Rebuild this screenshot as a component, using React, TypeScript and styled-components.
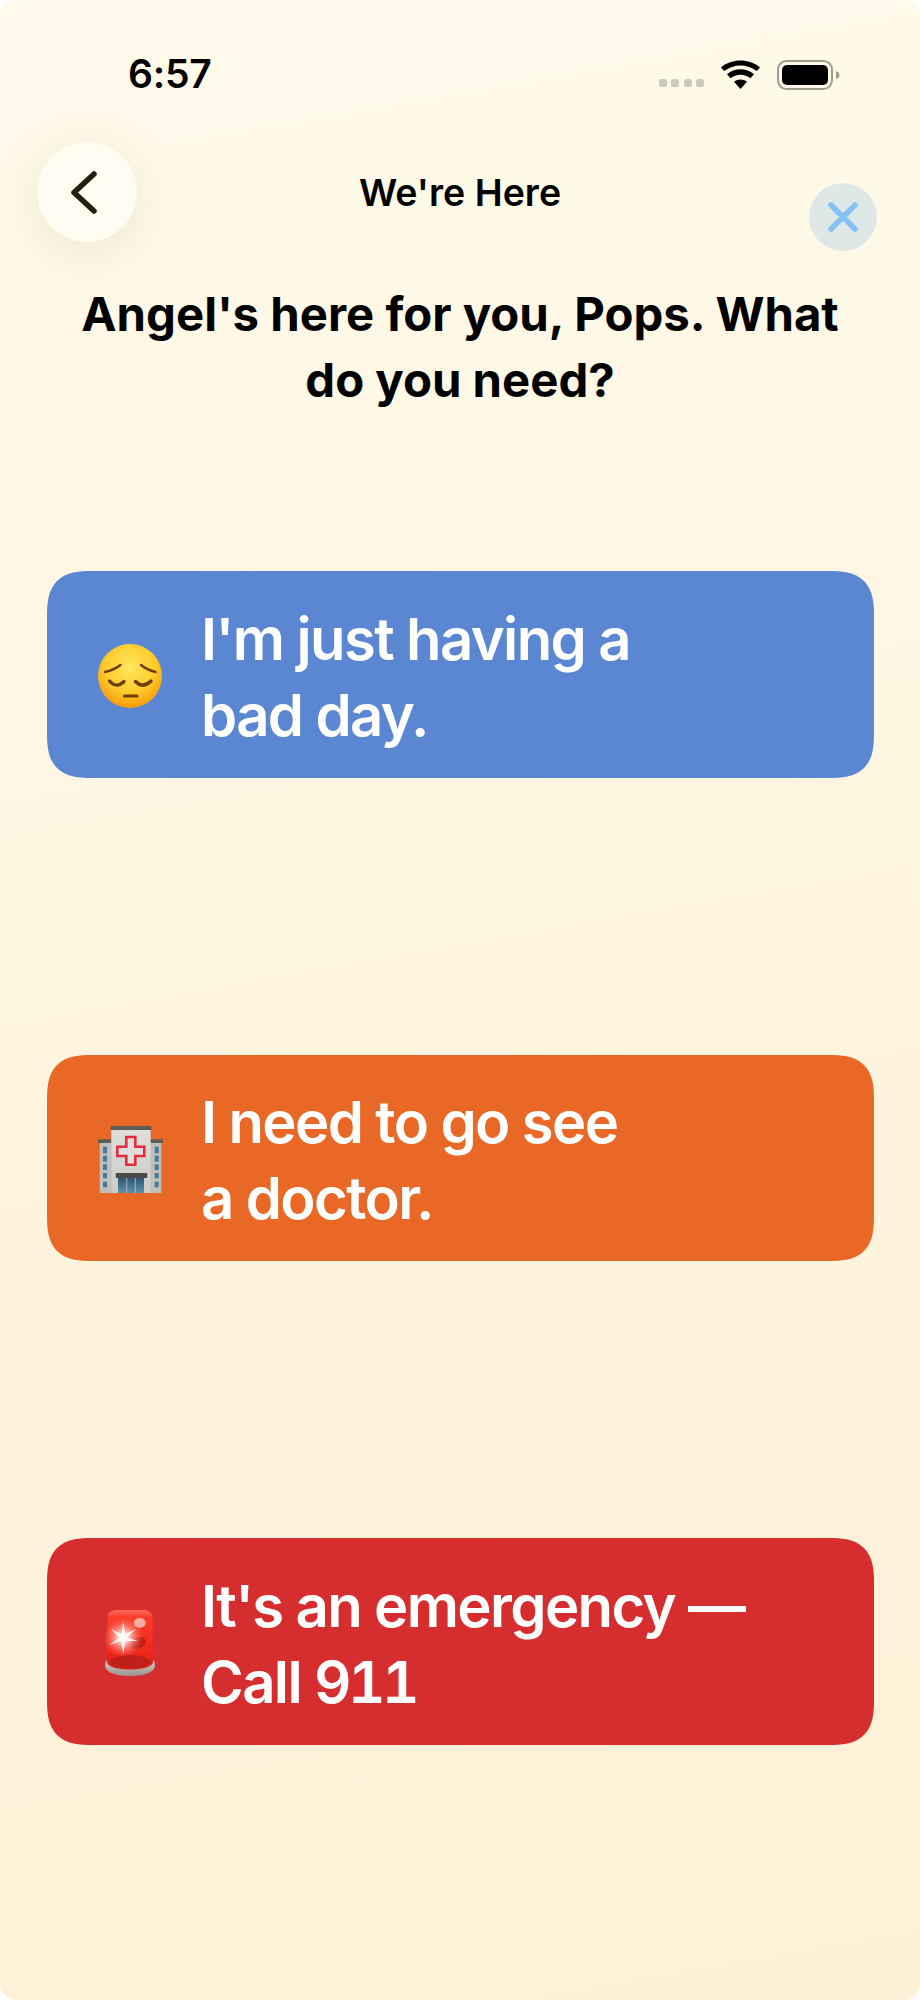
import React from "react";
import styled, { createGlobalStyle } from "styled-components";

const Global = createGlobalStyle`
  html, body { margin: 0; padding: 0; background: #fff; }
  body { font-family: Inter, "Liberation Sans", sans-serif; }
`;

const Screen = styled.div`
  width: 920px;
  height: 2000px;
  display: flex;
  flex-direction: column;
  overflow: hidden;
  border-radius: 16px;
  background: linear-gradient(170deg, #fffaea 0%, #fef0d6 100%);
`;

const StatusBar = styled.div`
  height: 142px;
  box-sizing: border-box;
  padding: 49px 80px 0 128px;
  display: flex;
  justify-content: space-between;
  align-items: flex-start;
`;

const Clock = styled.span`
  font-size: 39px;
  line-height: 50px;
  font-weight: 600;
  letter-spacing: -0.2px;
  color: #000;
`;

const StatusIcons = styled.div`
  display: flex;
  align-items: center;
  gap: 17px;
  padding-top: 11px;
`;

const Signal = styled.div`
  display: flex;
  gap: 4.5px;
  margin-top: 16px;
`;

const SignalDot = styled.span`
  width: 8px;
  height: 8px;
  border-radius: 2.5px;
  background: #cdc7bc;
`;

const Header = styled.div`
  display: grid;
  grid-template-columns: 1fr auto 1fr;
  padding: 0 37px;
  height: 110px;
`;

const BackButton = styled.button`
  width: 100px;
  height: 100px;
  border: 0;
  padding: 0;
  border-radius: 50%;
  background: #fffdf2;
  box-shadow: 0 10px 50px rgba(110, 90, 40, 0.12);
  display: flex;
  align-items: center;
  justify-content: center;
  color: #231f10;
`;

const ScreenTitle = styled.div`
  font-size: 37.5px;
  line-height: 44px;
  font-weight: 600;
  color: #000;
  margin-top: 29px;
`;

const CloseButton = styled.button`
  justify-self: end;
  width: 68px;
  height: 68px;
  margin: 41px 6px 0 0;
  border: 0;
  padding: 0;
  border-radius: 50%;
  background: #dee8e6;
  display: flex;
  align-items: center;
  justify-content: center;
  color: #84c1f5;
`;

const Prompt = styled.h1`
  margin: 29px 0 0;
  padding: 0 70px;
  text-align: center;
  font-size: 47.3px;
  line-height: 66px;
  font-weight: 700;
  color: #000;
`;

const Options = styled.div`
  margin-top: 158px;
  padding: 0 46px 0 47px;
  display: flex;
  flex-direction: column;
  gap: 277px;
`;

const Option = styled.button<{ $bg: string }>`
  height: 206.5px;
  border: 0;
  border-radius: 46px;
  corner-shape: superellipse(1.5);
  background: ${(p) => p.$bg};
  display: flex;
  align-items: center;
  gap: 38px;
  padding: 0 0 0 50px;
  color: #fff;
  font-family: inherit;
  text-align: left;
`;

const EmojiBox = styled.span`
  width: 66px;
  height: 70px;
  margin-top: 3px;
  display: flex;
  align-items: center;
  justify-content: center;
  flex: none;
`;

const OptionText = styled.span`
  font-size: 58px;
  line-height: 76px;
  font-weight: 600;
  letter-spacing: -1.6px;
  padding-top: 5px;
`;

const Line = styled.span`
  display: block;
  white-space: pre;
`;

const Digits = styled.span`
  font-variant-numeric: tabular-nums;
  letter-spacing: -3.5px;
`;

const Wifi = () => (
  <svg width="39" height="30" viewBox="0 0 39 30">
    <path d="M19.5 29 L13 21.8 C16.8 18.6 22.2 18.6 26 21.8 Z" fill="#000" />
    <path d="M9.6 18.2 L6 14.2 C13.5 7.7 25.5 7.7 33 14.2 L29.4 18.2 C23.6 13.5 15.4 13.5 9.6 18.2 Z" fill="#000" />
    <path d="M3.2 11 L0 7.4 C11 -1.7 28 -1.7 39 7.4 L35.8 11 C26.5 3.5 12.5 3.5 3.2 11 Z" fill="#000" />
  </svg>
);

const Battery = () => (
  <svg width="63" height="30" viewBox="0 0 63 30">
    <rect x="1" y="1" width="54" height="28" rx="8.5" fill="none" stroke="#a39c8c" strokeWidth="2" />
    <rect x="5" y="5" width="46" height="20" rx="5" fill="#000" />
    <path d="M59 11 C61.5 11.8 62.5 13.2 62.5 15 C62.5 16.8 61.5 18.2 59 19 Z" fill="#a39c8c" />
  </svg>
);

const PensiveFace = () => (
  <svg width="64" height="64" viewBox="0 0 64 64">
    <defs>
      <radialGradient id="faceFill" cx="50%" cy="36%" r="64%">
        <stop offset="0%" stopColor="#ffe75e" />
        <stop offset="60%" stopColor="#ffcc2e" />
        <stop offset="100%" stopColor="#f79a08" />
      </radialGradient>
    </defs>
    <circle cx="32" cy="32" r="32" fill="url(#faceFill)" />
    <g fill="none" stroke="#6e3f06" strokeLinecap="round">
      <path d="M7 28 Q16 26 22.5 21" strokeWidth="2.4" />
      <path d="M57.5 28 Q49 26 43 21" strokeWidth="2.4" />
      <path d="M11.5 37 Q18.5 45 26 37.5" strokeWidth="3.4" />
      <path d="M53 37 Q45 45 37.5 37.5" strokeWidth="3.4" />
      <path d="M26.5 52 H39" strokeWidth="3.2" />
    </g>
  </svg>
);

const WINDOW_ROWS: [number, number][] = [
  [20.7, 6.6],
  [29.7, 6],
  [38.3, 5.7],
  [47, 5.3],
  [55.7, 5.6],
];

const Hospital = () => (
  <svg width="65" height="67" viewBox="0 0 65 67">
    <defs>
      <linearGradient id="glass" x1="0" y1="0" x2="0" y2="1">
        <stop offset="0%" stopColor="#2f5873" />
        <stop offset="100%" stopColor="#5f90ae" />
      </linearGradient>
      <linearGradient id="tower" x1="0" y1="0" x2="0" y2="1">
        <stop offset="0%" stopColor="#dededb" />
        <stop offset="100%" stopColor="#cbcbc7" />
      </linearGradient>
    </defs>
    <rect x="1.7" y="16" width="12" height="51" fill="#bfbfbb" />
    <rect x="51.3" y="16" width="12" height="51" fill="#bfbfbb" />
    <rect x="0" y="13.3" width="13.5" height="3.7" rx="1" fill="#5e5c55" />
    <rect x="51.5" y="13.3" width="13.5" height="3.7" rx="1" fill="#5e5c55" />
    {WINDOW_ROWS.map(([y, h]) => (
      <React.Fragment key={y}>
        <rect x="5" y={y} width="4" height={h} fill="#47799a" />
        <rect x="56.7" y={y} width="4" height={h} fill="#47799a" />
      </React.Fragment>
    ))}
    <rect x="13.3" y="4" width="39.4" height="63" fill="url(#tower)" />
    <rect x="12.5" y="0" width="41" height="4" rx="1" fill="#5e5c55" />
    <path d="M28.3 11 H37.3 V20.7 H46.3 V30 H37.3 V38.7 H28.3 V30 H19.3 V20.7 H28.3 Z" fill="#e2dcdc" stroke="#e42c3c" strokeWidth="2.6" />
    <rect x="17.7" y="47" width="31.6" height="5" rx="1" fill="#4a4a46" />
    <rect x="20" y="52" width="26" height="15" fill="url(#glass)" />
    <path d="M28.7 52 V67 M37.3 52 V67" stroke="#a9b7be" strokeWidth="1" />
  </svg>
);

const Siren = () => (
  <svg width="50" height="66" viewBox="0 0 50 66">
    <defs>
      <linearGradient id="dome" x1="0" y1="0" x2="0" y2="1">
        <stop offset="0%" stopColor="#ff6f5a" />
        <stop offset="12%" stopColor="#fb3b28" />
        <stop offset="70%" stopColor="#f0281b" />
        <stop offset="100%" stopColor="#d3201a" />
      </linearGradient>
      <linearGradient id="sirenBase" x1="0" y1="0" x2="0" y2="1">
        <stop offset="0%" stopColor="#d3cdc8" />
        <stop offset="100%" stopColor="#9a948e" />
      </linearGradient>
      <radialGradient id="flare">
        <stop offset="0%" stopColor="#ffffff" />
        <stop offset="30%" stopColor="#ffd8d2" stopOpacity="0.85" />
        <stop offset="100%" stopColor="#ff7a66" stopOpacity="0" />
      </radialGradient>
    </defs>
    <path d="M0 55 C0 52 2 50 2 50 H48 C48 50 50 52 50 55 C50 63 38 66 25 66 C12 66 0 63 0 55 Z" fill="url(#sirenBase)" />
    <path d="M2.5 8 C2.5 2 7 0 12 0 H38 C43 0 47.5 2 47.5 8 L48 52 C48 62 2 62 2 52 Z" fill="url(#dome)" />
    <path d="M4 52 C10 46 18 45 25 45 C32 45 40 46 46 52 C44 60 6 60 4 52 Z" fill="#c0201a" />
    <ellipse cx="33" cy="33" rx="8" ry="5.5" fill="#a81810" opacity="0.7" transform="rotate(-25 33 33)" />
    <ellipse cx="34.7" cy="13" rx="6" ry="5" fill="#ffc9c0" opacity="0.8" />
    <circle cx="18.3" cy="27.3" r="20" fill="url(#flare)" />
    <path d="M18.3 11 L20 24 L31 19 L22 27.5 L33 31 L20.5 31 L18.3 44 L16 31 L4 35 L14.5 27.5 L6 19 L16.5 24 Z" fill="#fff" opacity="0.85" />
  </svg>
);

const App = () => (
  <Screen>
    <Global />
    <StatusBar>
      <Clock>6:57</Clock>
      <StatusIcons>
        <Signal>
          <SignalDot />
          <SignalDot />
          <SignalDot />
          <SignalDot />
        </Signal>
        <Wifi />
        <Battery />
      </StatusIcons>
    </StatusBar>
    <Header>
      <BackButton aria-label="Back">
        <svg width="100" height="100" viewBox="0 0 100 100" fill="none" stroke="currentColor" strokeWidth="5.5" strokeLinecap="round" strokeLinejoin="round">
          <path d="M57 32 L37 50.5 L57 69" />
        </svg>
      </BackButton>
      <ScreenTitle>We're Here</ScreenTitle>
      <CloseButton aria-label="Close">
        <svg width="68" height="68" viewBox="0 0 68 68" fill="none" stroke="currentColor" strokeWidth="5.5" strokeLinecap="round">
          <path d="M22 22 L46 46 M46 22 L22 46" />
        </svg>
      </CloseButton>
    </Header>
    <Prompt>Angel's here for you, Pops. What do you need?</Prompt>
    <Options>
      <Option $bg="#5b86d2">
        <EmojiBox><PensiveFace /></EmojiBox>
        <OptionText>
          <Line>I'm just having a</Line>
          <Line>bad day.</Line>
        </OptionText>
      </Option>
      <Option $bg="#e96825">
        <EmojiBox><Hospital /></EmojiBox>
        <OptionText>
          <Line>I need to go see</Line>
          <Line>a doctor.</Line>
        </OptionText>
      </Option>
      <Option $bg="#d62e2e">
        <EmojiBox><Siren /></EmojiBox>
        <OptionText>
          <Line>It's an emergency —</Line>
          <Line>Call <Digits>911</Digits></Line>
        </OptionText>
      </Option>
    </Options>
  </Screen>
);

export default App;
